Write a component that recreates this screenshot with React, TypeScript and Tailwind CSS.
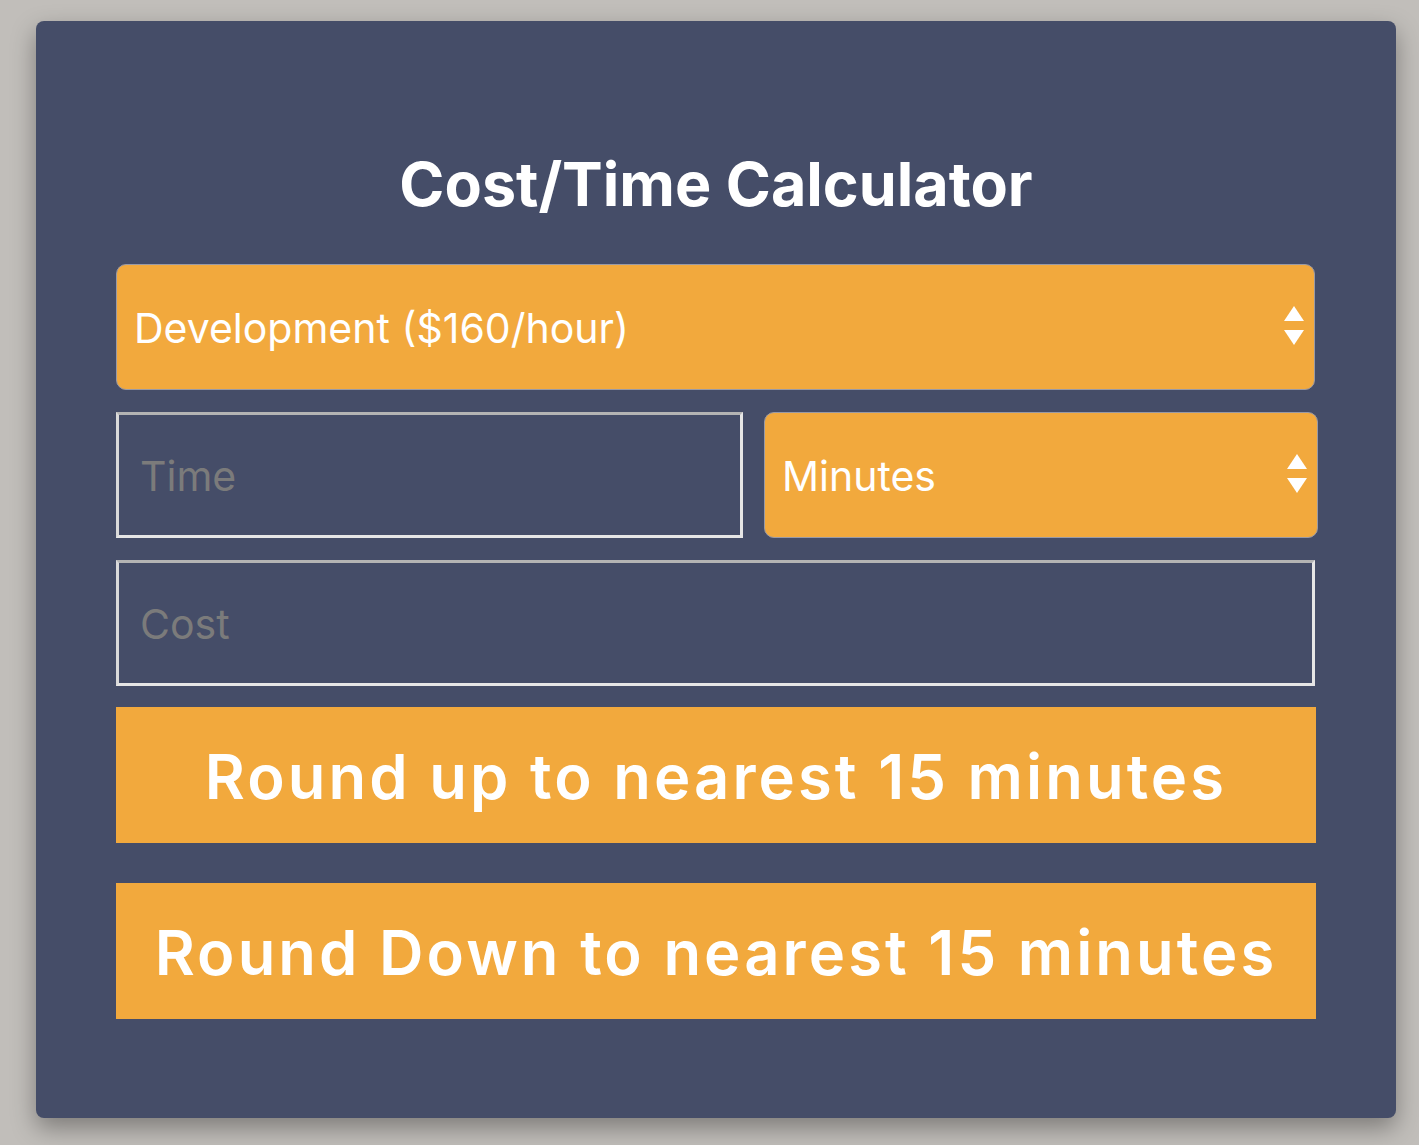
import type { ReactNode } from 'react';

function Arrows() {
  return (
    <svg width="22" height="42" viewBox="0 0 22 42" className="shrink-0">
      <polygon points="11,0 21,15 1,15" fill="#ffffff" />
      <polygon points="1,24 21,24 11,39" fill="#ffffff" />
    </svg>
  );
}

function SelectBox({ label, className }: { label: string; className?: string }) {
  return (
    <div
      className={`h-[126px] flex items-center justify-between pl-[17px] pr-[9px] bg-[#f2a93d] border border-[#9a9aa5] rounded-[10px] ${className ?? ''}`}
    >
      <span className="text-[41px] text-white pt-[3px]">{label}</span>
      <Arrows />
    </div>
  );
}

function InputBox({ placeholder, className }: { placeholder: string; className?: string }) {
  return (
    <div
      className={`h-[126px] flex items-center pl-[21px] border-[3px] border-[#e6e6e6] border-t-[#b4b4b4] border-l-[#dadada] ${className ?? ''}`}
    >
      <span className="text-[41px] text-[#7b7b7b] pt-[3px]">{placeholder}</span>
    </div>
  );
}

function Button({ children }: { children: ReactNode }) {
  return (
    <button className="h-[136px] w-full pt-[4px] bg-[#f2a93d] text-white font-semibold text-[61.5px] tracking-[0.05em]">
      {children}
    </button>
  );
}

export default function App() {
  return (
    <div className="min-h-screen bg-[#c1beba] pt-[21px] pl-[36px] font-['Inter',sans-serif]">
      <div className="w-[1360px] h-[1097px] bg-[#454d68] rounded-[8px] shadow-[0_10px_24px_rgba(0,0,0,0.35)] px-[80px] pt-[133px]">
        <h1 className="text-center text-white font-bold text-[61px] leading-none mb-[49px]">
          Cost/Time Calculator
        </h1>

        <SelectBox label="Development ($160/hour)" className="w-[1199px]" />

        <div className="flex gap-[21px] mt-[22px]">
          <InputBox placeholder="Time" className="w-[627px]" />
          <SelectBox label="Minutes" className="flex-1 -mr-[2px]" />
        </div>

        <InputBox placeholder="Cost" className="w-[1199px] mt-[22px]" />

        <div className="w-[1200px] mt-[21px] flex flex-col gap-[40px]">
          <Button>Round up to nearest 15 minutes</Button>
          <Button>Round Down to nearest 15 minutes</Button>
        </div>
      </div>
    </div>
  );
}
